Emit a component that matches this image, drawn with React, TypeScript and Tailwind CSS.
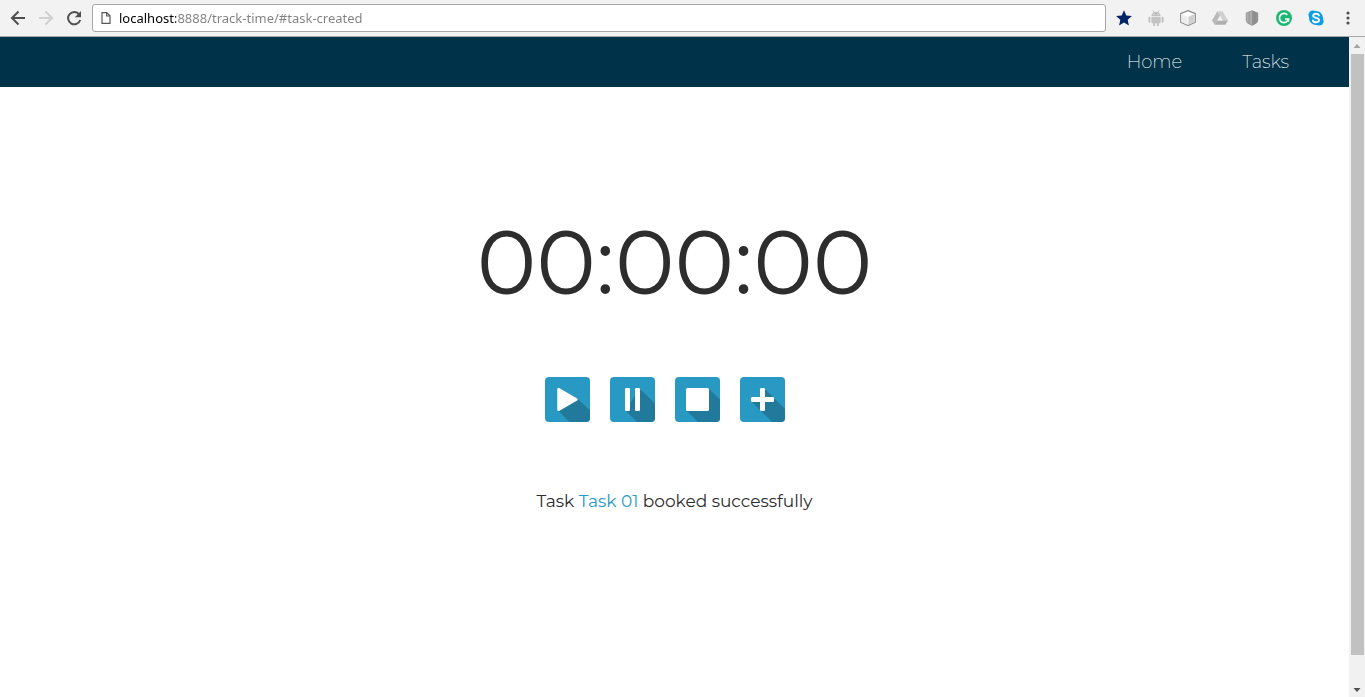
import { useState, type ReactNode } from "react";

const display = "font-['Montserrat','Inter',sans-serif]";

function BrowserButton({ label, className, children }: { label: string; className?: string; children: ReactNode }) {
  return (
    <button type="button" aria-label={label} className={`flex size-7 shrink-0 items-center justify-center ${className ?? ""}`}>
      {children}
    </button>
  );
}

function ArrowIcon() {
  return (
    <svg viewBox="0 0 16 16" className="size-4" fill="none" stroke="currentColor" strokeWidth="2">
      <path d="M15 8H2.5M8.5 1.5 2 8l6.5 6.5" />
    </svg>
  );
}

function ReloadIcon() {
  return (
    <svg viewBox="0 0 16 16" className="size-4" fill="none">
      <path d="M13.2 4.3A6.2 6.2 0 1 0 14.2 10" stroke="currentColor" strokeWidth="2" />
      <path d="M15 1v6.2H8.8z" fill="currentColor" />
    </svg>
  );
}

function PageIcon() {
  return (
    <svg viewBox="0 0 10 12" className="h-3 w-2.5 shrink-0" fill="none" stroke="#5a5a5a" strokeWidth="1.2">
      <path d="M1 .6h4.8L9 3.8v7.6H1zM5.6.6V4H9" />
    </svg>
  );
}

const extensions: { label: string; icon: ReactNode }[] = [
  {
    label: "Bookmark this page",
    icon: <path fill="#04246a" d="M8 .2l2.3 5.2 5.6.5-4.200 3.800 1.200 5.700L8 12.500l-4.900 2.900 1.200-5.700L.1 5.900l5.600-.5z" />,
  },
  {
    label: "Android",
    icon: (
      <g fill="#c2c2c2">
        <path d="M3.400 6.200a4.600 4.400 0 0 1 9.200 0z" />
        <path d="M4.800.4l1.400 2.100M11.200.4 9.800 2.500" stroke="#c2c2c2" strokeWidth=".8" />
        <path d="M3.400 7h9.200v5.600a.6.6 0 0 1-.6.6h-1.200v2.100a.7.7 0 0 1-1.900 0v-2.100H7.100v2.100a.7.7 0 0 1-1.900 0v-2.100H4a.6.6 0 0 1-.6-.6z" />
        <rect x=".4" y="6.800" width="2" height="6" rx="1" />
        <rect x="13.600" y="6.800" width="2" height="6" rx="1" />
        <circle cx="6" cy="4.400" r=".5" fill="#f2f2f2" />
        <circle cx="10" cy="4.400" r=".5" fill="#f2f2f2" />
      </g>
    ),
  },
  {
    label: "Cube",
    icon: (
      <g stroke="#8e8e8e" strokeWidth="1.200" strokeLinejoin="round">
        <path fill="#fff" d="M8 .6l7.300 3v8.600L8 15.500.7 12.200V3.600z" />
        <path fill="#d0d0d0" stroke="none" d="M8.400 6.800 14.700 4v8L8.400 14.800z" />
        <path fill="#ececec" stroke="none" d="M1.300 4l6.300 2.800v8L1.300 12z" />
      </g>
    ),
  },
  {
    label: "Drive",
    icon: (
      <g>
        <path fill="#b9b9b9" d="M5.400 1.300 0 10.600l2.600 4.200L8 5.600z" />
        <path fill="#cfcfcf" d="M5.400 1.300h5.200L16 10.600h-5.200z" />
        <path fill="#b0b0b0" d="M5.200 10.600H16l-2.600 4.200H2.600z" />
        <path fill="#f2f2f2" d="M8 6.400l2.100 4.200H5.800z" />
      </g>
    ),
  },
  {
    label: "Shield",
    icon: (
      <g>
        <path fill="#929292" d="M8 .2l6.200 2.500v7.500c0 2.400-3.100 4.200-6.200 5.600-3.100-1.400-6.200-3.200-6.200-5.600V2.700z" />
        <path fill="#adadad" d="M8 .8v14.400c-2.900-1.300-5.600-2.900-5.600-5V3.100z" />
        <path d="M5.200 2v11.800M10.800 2v11.800" stroke="#858585" strokeWidth=".6" />
      </g>
    ),
  },
  {
    label: "Grammar checker",
    icon: (
      <g>
        <circle cx="8" cy="8" r="8" fill="#1bb873" />
        <path d="M11.300 4.800A4.600 4.600 0 1 0 12.500 9H9" fill="none" stroke="#fff" strokeWidth="1.700" />
        <path d="M12.500 9v2.700" stroke="#fff" strokeWidth="1.500" />
      </g>
    ),
  },
  {
    label: "Skype",
    icon: (
      <g>
        <circle cx="8" cy="8" r="7" fill="#0d9fe4" />
        <circle cx="4.800" cy="4.800" r="4.400" fill="#0d9fe4" />
        <circle cx="11.200" cy="11.200" r="4.400" fill="#0d9fe4" />
        <path
          d="M11 5.400C10.500 4.200 9.300 3.800 8 3.800c-1.500 0-2.800.7-2.800 2 0 2.900 5.800 1.300 5.800 4.300 0 1.400-1.400 2.200-3 2.200s-2.700-.6-3.100-1.900"
          fill="none"
          stroke="#fff"
          strokeWidth="1.900"
          strokeLinecap="round"
        />
      </g>
    ),
  },
];

function BrowserBar() {
  const [url, setUrl] = useState("localhost:8888/track-time/#task-created");
  return (
    <header className="flex h-[37px] shrink-0 items-center border-b border-[#a9a9a9] bg-[#f2f2f2] pr-[7px] pl-1 text-[#505050]">
      <BrowserButton label="Back">
        <ArrowIcon />
      </BrowserButton>
      <BrowserButton label="Forward" className="-scale-x-100 text-[#d0d0d0]">
        <ArrowIcon />
      </BrowserButton>
      <BrowserButton label="Reload">
        <ReloadIcon />
      </BrowserButton>
      <div className="ml-1 flex h-7 min-w-0 flex-1 items-center gap-2 rounded-[3px] border border-[#a6a6a6] bg-white pl-2">
        <PageIcon />
        <input
          type="text"
          aria-label="Address"
          value={url}
          onChange={(e) => setUrl(e.target.value)}
          className="h-5 min-w-0 flex-1 bg-[linear-gradient(to_right,#000_57px,#808080_57px)] bg-clip-text font-['Noto_Sans',sans-serif] text-[13px] text-transparent caret-black outline-none"
        />
      </div>
      <div className="ml-1 flex shrink-0 gap-1">
        {extensions.map((item) => (
          <BrowserButton key={item.label} label={item.label}>
            <svg viewBox="0 0 16 16" className="size-4">
              {item.icon}
            </svg>
          </BrowserButton>
        ))}
      </div>
      <button type="button" aria-label="Menu" className="ml-2 flex h-7 w-5 shrink-0 items-center justify-center">
        <svg viewBox="0 0 4 14" className="h-3.5 w-1" fill="currentColor">
          <circle cx="2" cy="2" r="1.600" />
          <circle cx="2" cy="7" r="1.600" />
          <circle cx="2" cy="12" r="1.600" />
        </svg>
      </button>
    </header>
  );
}

const controls: { label: string; shadow: string; glyph: ReactNode }[] = [
  {
    label: "Start",
    shadow: "M13 33.500 24.500 45H45V33.500L32.500 21.500z",
    glyph: <path d="M13.500 12.200v20.600L31.500 22.500z" stroke="#fff" strokeWidth="2.500" strokeLinejoin="round" />,
  },
  {
    label: "Pause",
    shadow: "M15.500 33.500 27 45H45V26.500L29.500 11.500z",
    glyph: (
      <>
        <rect x="15" y="11" width="5" height="23" rx="1.200" />
        <rect x="25" y="11" width="5" height="23" rx="1.200" />
      </>
    ),
  },
  {
    label: "Stop",
    shadow: "M11.500 33.500 23 45H45V22.500L33.500 11.500z",
    glyph: <rect x="11" y="11" width="23" height="23" rx="1.500" />,
  },
  {
    label: "Add task",
    shadow: "M11.500 24.500 32 45H45V32L33.500 20.500 24.500 11.500 20 20z",
    glyph: (
      <>
        <rect x="20" y="11" width="5" height="23" rx="1.200" />
        <rect x="11" y="20" width="23" height="5" rx="1.200" />
      </>
    ),
  },
];

function Scrollbar() {
  return (
    <div className="flex w-4 shrink-0 flex-col items-center bg-[#f1f1f1]" aria-hidden="true">
      <svg viewBox="0 0 16 17" className="h-[17px] w-4 shrink-0">
        <path d="M4.500 11h7L8 7z" fill="#a3a3a3" />
      </svg>
      <div className="ml-px w-[13px] grow-[601] bg-[#c1c1c1]" />
      <div className="grow-[25]" />
      <svg viewBox="0 0 16 17" className="h-[17px] w-4 shrink-0">
        <path d="M4.500 8h7L8 12z" fill="#505050" />
      </svg>
    </div>
  );
}

export default function App() {
  return (
    <div className="flex min-h-screen flex-col bg-white">
      <BrowserBar />
      <div className="flex flex-1">
        <div className={`flex min-w-0 flex-1 flex-col ${display}`}>
          <nav className="flex h-[50px] items-center justify-end gap-[60px] bg-[#003349] pr-[60px] text-[18px] font-extralight text-white">
            <a href="#home">Home</a>
            <a href="#tasks">Tasks</a>
          </nav>
          <main className="flex flex-col items-center pt-[120px]">
            <h1 className="text-[90px] leading-[110px] font-normal text-[#2d2d2d]">00:00:00</h1>
            <div className="mt-[60px] mr-5 flex gap-5">
              {controls.map((control) => (
                <button key={control.label} type="button" aria-label={control.label} className="size-[45px] overflow-hidden rounded">
                  <svg viewBox="0 0 45 45" className="size-full">
                    <rect width="45" height="45" fill="#2899c2" />
                    <path d={control.shadow} fill="#217a9b" />
                    <g fill="#fff">{control.glyph}</g>
                  </svg>
                </button>
              ))}
            </div>
            <p className="mt-[67px] text-[17px] leading-6 font-normal text-[#2d2d2d]">
              Task{" "}
              <a href="#task-01" className="text-[#2899c2]">
                Task 01
              </a>{" "}
              booked successfully
            </p>
          </main>
        </div>
        <Scrollbar />
      </div>
    </div>
  );
}
